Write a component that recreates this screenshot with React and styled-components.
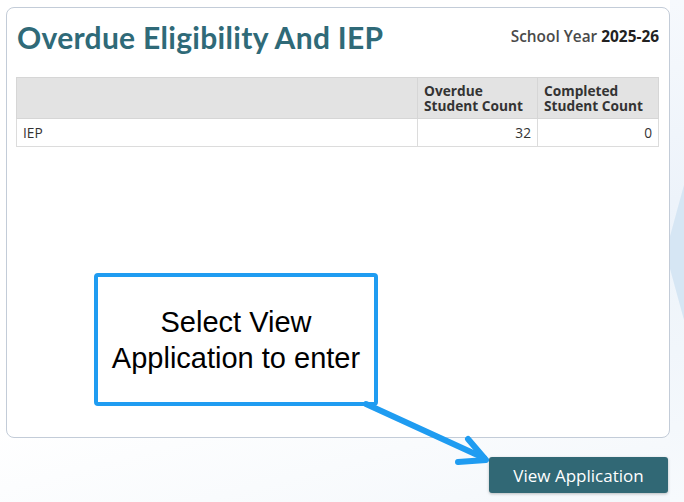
import React from 'react'
import styled, { createGlobalStyle } from 'styled-components'

const GlobalStyle = createGlobalStyle`
  html, body {
    margin: 0;
    padding: 0;
  }
  body {
    width: 684px;
    height: 502px;
    overflow: hidden;
    font-family: "Open Sans", "Noto Sans", sans-serif;
    background: linear-gradient(165deg, #ffffff 0%, #ffffff 62%, #f3f7fb 100%);
  }
`

const Page = styled.div`
  position: relative;
  width: 684px;
  height: 502px;
  box-sizing: border-box;
  padding: 7px 14px 0 6px;
  display: flex;
  flex-direction: column;
  align-items: stretch;
`

const Decor = styled.div`
  position: absolute;
  top: 0;
  right: 0;
  width: 14px;
  height: 502px;
  background: linear-gradient(180deg, #f6f9fd 0%, #edf3fa 40%, #f1f6fb 70%, #f7fafd 100%);
  &::after {
    content: '';
    position: absolute;
    left: 0;
    top: 185px;
    width: 14px;
    height: 135px;
    background: #d6e6f4;
    clip-path: polygon(100% 0, 100% 100%, 0 62%, 0 38%);
  }
`

const Card = styled.section`
  position: relative;
  z-index: 1;
  height: 431px;
  box-sizing: border-box;
  background: #fff;
  border: 1px solid #c3ccd8;
  border-radius: 8px;
  padding: 8px 10px 0 9px;
`

const Header = styled.div`
  display: flex;
  justify-content: space-between;
  align-items: flex-start;
  padding-left: 1px;
`

const Title = styled.h1`
  margin: 0;
  font-family: "Lato", "Noto Sans", sans-serif;
  font-weight: 700;
  font-size: 30px;
  line-height: 43px;
  color: #2f6a78;
  letter-spacing: 0.3px;
`

const Year = styled.div`
  margin-top: 11px;
  font-size: 15.4px;
  font-weight: 600;
  color: #4a4a4a;
  line-height: 20px;
  b {
    color: #222;
    font-weight: 700;
  }
`

const Table = styled.table`
  margin-top: 18px;
  width: 100%;
  border-collapse: collapse;
  font-size: 13.7px;
  color: #333;
`

const Th = styled.th`
  background: #e3e3e3;
  border: 1px solid #d6d6d6;
  text-align: left;
  font-weight: 700;
  line-height: 15px;
  padding: 5px 6px 5px 6px;
  height: 41px;
  box-sizing: border-box;
  width: ${p => p.$w || 'auto'};
  vertical-align: top;
`

const Td = styled.td`
  border: 1px solid #dcdcdc;
  padding: 0 6px;
  height: 27px;
  text-align: ${p => (p.$num ? 'right' : 'left')};
  color: #333;
`

const Footer = styled.div`
  display: flex;
  justify-content: flex-end;
  padding-top: 19px;
  position: relative;
  z-index: 1;
`

const Button = styled.button`
  width: 179px;
  height: 36px;
  margin-right: 2px;
  border: none;
  border-radius: 3px;
  background: #316875;
  color: #fff;
  font-family: "Open Sans", sans-serif;
  font-size: 17px;
  box-shadow: 0 1px 3px rgba(0, 0, 0, 0.25);
  cursor: pointer;
`

const Callout = styled.div`
  position: absolute;
  z-index: 2;
  left: 94px;
  top: 273px;
  width: 284px;
  height: 133px;
  box-sizing: border-box;
  border: 4px solid #1f9cf1;
  border-radius: 4px;
  background: #fff;
  display: flex;
  align-items: center;
  justify-content: center;
  text-align: center;
  font-family: "Liberation Sans", Arial, sans-serif;
  font-size: 29px;
  line-height: 36px;
  color: #000;
`

const Overlay = styled.svg`
  position: absolute;
  z-index: 3;
  left: 0;
  top: 0;
  pointer-events: none;
`

export default function App() {
  return (
    <>
      <GlobalStyle />
      <Page>
        <Decor />
        <Card>
          <Header>
            <Title>Overdue Eligibility And IEP</Title>
            <Year>
              School Year <b>2025-26</b>
            </Year>
          </Header>
          <Table>
            <thead>
              <tr>
                <Th></Th>
                <Th $w="120px">Overdue<br />Student Count</Th>
                <Th $w="121px">Completed<br />Student Count</Th>
              </tr>
            </thead>
            <tbody>
              <tr>
                <Td>IEP</Td>
                <Td $num>32</Td>
                <Td $num>0</Td>
              </tr>
            </tbody>
          </Table>
        </Card>
        <Footer>
          <Button>View Application</Button>
        </Footer>
        <Callout>
          Select View
          <br />
          Application to enter
        </Callout>
        <Overlay width="684" height="502" viewBox="0 0 684 502">
          <g fill="none" stroke="#1f9cf1" strokeWidth="6" strokeLinecap="round" strokeLinejoin="round">
            <line x1="366" y1="404" x2="484" y2="458" />
            <polyline points="468,439 486,460 458,462" />
          </g>
        </Overlay>
      </Page>
    </>
  )
}
